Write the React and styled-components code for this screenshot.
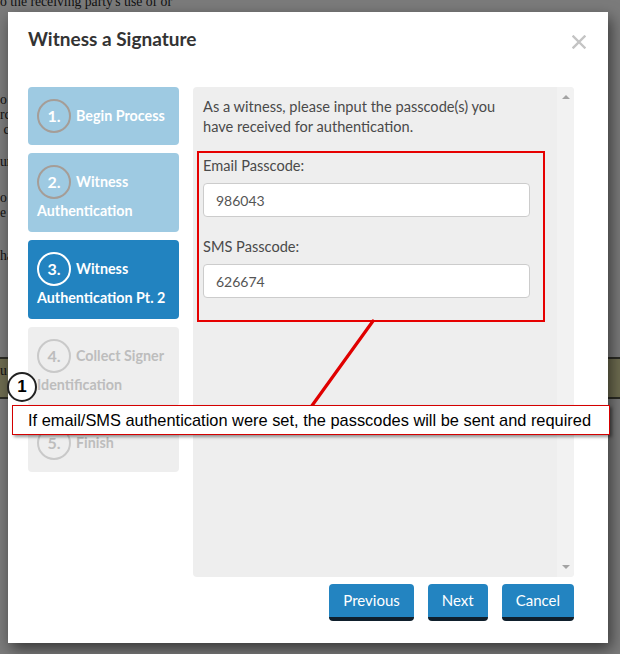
import React from 'react';
import styled, { createGlobalStyle, css } from 'styled-components';

const Global = createGlobalStyle`
  html, body { margin: 0; padding: 0; }
  body { width: 620px; height: 654px; overflow: hidden; background: #7b7b7b; }
  #root { position: relative; width: 620px; height: 654px; overflow: hidden; }
`;

/* ---------- dimmed document behind the dialog ---------- */
const Document = styled.div`
  height: 654px;
  overflow: hidden;
  background: #7b7b7b;
  font-family: "Liberation Serif", "Times New Roman", serif;
  font-size: 13.7px;
  line-height: 15px;
  color: #111;
`;

const DocPara = styled.p`
  margin: ${(p) => p.$top}px 0 0 0;
  white-space: pre;
`;

const DocBand = styled.div`
  margin-top: ${(p) => p.$top}px;
  height: 34px;
  border-top: 2px solid #2b2b24;
  border-bottom: 2px solid #2b2b24;
  background: #6e6c50;
  padding-top: 4px;
  box-sizing: content-box;
`;

/* ---------- dialog ---------- */
const Modal = styled.div`
  position: absolute;
  left: 8px;
  top: 12px;
  width: 600px;
  height: 631px;
  box-sizing: border-box;
  padding: 15px 22px 0 20px;
  background: #fff;
  box-shadow: 3px 6px 14px rgba(0, 0, 0, 0.55);
  display: flex;
  flex-direction: column;
  font-family: Lato, "Noto Sans", sans-serif;
`;

const Header = styled.div`
  display: flex;
  justify-content: space-between;
  align-items: flex-start;
`;

const Title = styled.h2`
  margin: 0;
  font-size: 19px;
  line-height: 24px;
  font-weight: 700;
  color: #333;
`;

const CloseButton = styled.button`
  margin-top: 8px;
  padding: 0;
  border: 0;
  background: none;
  width: 14px;
  height: 14px;
  display: flex;
`;

const Body = styled.div`
  margin-top: 36px;
  margin-right: 12px;
  display: flex;
  gap: 14px;
`;

const Steps = styled.div`
  width: 151px;
  display: flex;
  flex-direction: column;
  gap: 8px;
`;

const stepThemes = {
  done: css`
    background: #9ecae2;
    color: #fff;
    --ring: #a59d97;
  `,
  active: css`
    background: #2283c0;
    color: #fff;
    --ring: #fff;
  `,
  todo: css`
    background: #eeeeee;
    color: #bdbdbd;
    --ring: #c9c9c9;
  `,
};

const Step = styled.div`
  border-radius: 4px;
  padding: 13px 8px 11px 9px;
  font-size: 14.3px;
  line-height: 21px;
  font-weight: 700;
  ${(p) => stepThemes[p.$state]}
`;

const StepNumber = styled.span`
  display: inline-block;
  width: 30px;
  height: 30px;
  border: 2px solid var(--ring);
  border-radius: 50%;
  text-align: center;
  line-height: 30px;
  font-size: 16px;
  vertical-align: middle;
  margin-right: 5px;
  position: relative;
  top: -1px;
`;

const Panel = styled.div`
  width: 381px;
  height: 490px;
  background: #eeeeee;
  border-radius: 4px;
  display: flex;
  overflow: hidden;
`;

const PanelContent = styled.div`
  flex: 1;
  padding: 10px 10px;
  color: #4a4a4a;
  font-size: 14.6px;
  line-height: 20px;
`;

const Intro = styled.p`
  margin: 0;
  max-width: 310px;
`;

const Highlight = styled.div`
  margin: 14px 0 0 -6px;
  width: 348px;
  box-sizing: border-box;
  border: 2px solid #e60000;
  padding: 3px 0 22px 4px;
`;

const FieldLabel = styled.label`
  display: block;
  margin: ${(p) => (p.$first ? 0 : 20)}px 0 7px;
`;

const TextInput = styled.input`
  display: block;
  width: 327px;
  height: 34px;
  box-sizing: border-box;
  border: 1px solid #cccccc;
  border-radius: 4px;
  padding: 0 12px;
  background: #fff;
  font-family: Lato, "Noto Sans", sans-serif;
  font-size: 14px;
  color: #555;
  outline: none;
`;

const Scrollbar = styled.div`
  width: 17px;
  background: #f2f2f2;
  display: flex;
  flex-direction: column;
  justify-content: space-between;
  align-items: center;
  padding: 8px 0;
`;

const Arrow = styled.span`
  width: 0;
  height: 0;
  border-left: 4px solid transparent;
  border-right: 4px solid transparent;
  ${(p) =>
    p.$dir === 'up'
      ? css`border-bottom: 4px solid #a3a3a3;`
      : css`border-top: 4px solid #a3a3a3;`}
`;

const Footer = styled.div`
  margin: 7px 12px 0 0;
  display: flex;
  justify-content: flex-end;
  gap: 14px;
`;

const Button = styled.button`
  height: 37px;
  box-sizing: border-box;
  padding: 0 14px;
  border: 0;
  border-bottom: 4px solid #0f1f2c;
  border-radius: 4px;
  background: #2384c1;
  color: #fff;
  font-family: Lato, "Noto Sans", sans-serif;
  font-size: 15px;
  line-height: 33px;
`;

/* ---------- annotation overlay ---------- */
const Pointer = styled.svg`
  position: absolute;
  left: 305px;
  top: 316px;
  overflow: visible;
`;

const Callout = styled.div`
  position: absolute;
  left: 12px;
  top: 405px;
  width: 598px;
  height: 30px;
  box-sizing: border-box;
  border: 1px solid #d40000;
  background: #fff;
  box-shadow: 2px 2px 3px rgba(0, 0, 0, 0.4);
  padding-left: 15px;
  font-family: "Liberation Sans", Arial, sans-serif;
  font-size: 16.4px;
  line-height: 28px;
  color: #000;
  white-space: nowrap;
`;

const Badge = styled.div`
  position: absolute;
  left: 7px;
  top: 372px;
  width: 30px;
  height: 30px;
  box-sizing: border-box;
  border: 2px solid #222;
  border-radius: 50%;
  background: #fff;
  display: flex;
  align-items: center;
  justify-content: center;
  font-family: "Liberation Sans", Arial, sans-serif;
  font-weight: 700;
  font-size: 17px;
  color: #000;
`;

const steps = [
  { n: 1, label: 'Begin Process', state: 'done' },
  { n: 2, label: 'Witness Authentication', state: 'done' },
  { n: 3, label: 'Witness Authentication Pt. 2', state: 'active' },
  { n: 4, label: 'Collect Signer Identification', state: 'todo' },
  { n: 5, label: 'Finish', state: 'todo' },
];

export default function App() {
  return (
    <>
      <Global />
      <Document>
        <DocPara $top={-6}>o the receiving party's use of or</DocPara>
        <DocPara $top={83}>{'o conf\nrc\n c'}</DocPara>
        <DocPara $top={17}>un</DocPara>
        <DocPara $top={21}>{'o\ne'}</DocPara>
        <DocPara $top={28}>ha</DocPara>
        <DocBand $top={94}>u</DocBand>
      </Document>

      <Modal role="dialog" aria-label="Witness a Signature">
        <Header>
          <Title>Witness a Signature</Title>
          <CloseButton aria-label="Close">
            <svg width="14" height="14" viewBox="0 0 14 14">
              <path d="M1.5 1.5 L12.5 12.5 M12.5 1.5 L1.5 12.5" stroke="#c4c4c4" strokeWidth="2.4" strokeLinecap="square" />
            </svg>
          </CloseButton>
        </Header>

        <Body>
          <Steps>
            {steps.map((s) => (
              <Step key={s.n} $state={s.state}>
                <StepNumber>{s.n}.</StepNumber>
                {s.label}
              </Step>
            ))}
          </Steps>

          <Panel>
            <PanelContent>
              <Intro>As a witness, please input the passcode(s) you have received for authentication.</Intro>
              <Highlight>
                <FieldLabel $first>Email Passcode:</FieldLabel>
                <TextInput readOnly value="986043" />
                <FieldLabel>SMS Passcode:</FieldLabel>
                <TextInput readOnly value="626674" />
              </Highlight>
            </PanelContent>
            <Scrollbar>
              <Arrow $dir="up" />
              <Arrow $dir="down" />
            </Scrollbar>
          </Panel>
        </Body>

        <Footer>
          <Button>Previous</Button>
          <Button>Next</Button>
          <Button>Cancel</Button>
        </Footer>
      </Modal>

      <Pointer width="72" height="94" viewBox="0 0 72 94">
        <line x1="68" y1="5" x2="6" y2="91" stroke="#e00000" strokeWidth="3.2" strokeLinecap="round" />
      </Pointer>
      <Callout>If email/SMS authentication were set, the passcodes will be sent and required</Callout>
      <Badge>1</Badge>
    </>
  );
}
